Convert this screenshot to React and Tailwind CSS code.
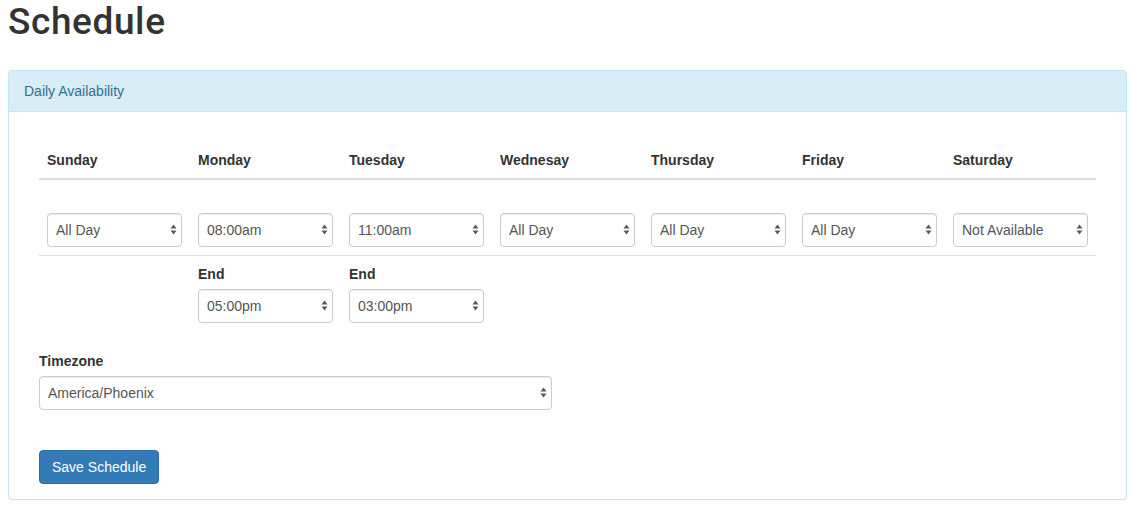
import React from 'react';

const days = [
    { name: 'Sunday', start: 'All Day' },
    { name: 'Monday', start: '08:00am', end: '05:00pm' },
    { name: 'Tuesday', start: '11:00am', end: '03:00pm' },
    { name: 'Wednesay', start: 'All Day' },
    { name: 'Thursday', start: 'All Day' },
    { name: 'Friday', start: 'All Day' },
    { name: 'Saturday', start: 'Not Available' },
];

// little up/down arrows like the native mac select
const Arrows = () => (
    <svg width="7" height="11" viewBox="0 0 7 11" className="shrink-0">
        <path d="M3.5 0.5 L6.5 4.5 L0.5 4.5 Z" fill="#5a5a5a" />
        <path d="M3.5 10.5 L6.5 6.5 L0.5 6.5 Z" fill="#5a5a5a" />
    </svg>
);

function FakeSelect({ value, className = '' }) {
    return (
        <div className={`flex items-center justify-between h-[34px] bg-white border border-[#ccc] rounded-[4px] pl-[8px] pr-[4px] text-[14px] text-[#555] shadow-[inset_0_1px_1px_rgba(0,0,0,0.075)] ${className}`}>
            <span className="leading-[20px]">{value}</span>
            <Arrows />
        </div>
    );
}

export default function App() {
    return (
        <div className="min-h-screen bg-white pl-[8px] pr-[7px] text-[#333] text-[14px] font-['Liberation_Sans','Helvetica_Neue',Arial,sans-serif]">
            <h1 className="pt-[2px] text-[37px] leading-[39.6px] font-medium tracking-[0.6px] text-[#333] mb-[28px] font-['Roboto','Liberation_Sans',sans-serif]">Schedule</h1>

            <div className="border border-[#bce8f1] rounded-[4px] bg-white">
                <div className="bg-[#d9edf7] border-b border-[#bce8f1] rounded-t-[3px] px-[15px] py-[10px] text-[#31708f] leading-[20px]">
                    Daily Availability
                </div>
                <div className="px-[15px] pt-[15px] pb-[15px]">
                    <div className="px-[15px] pt-[15px]">
                        <table className="w-full table-fixed border-collapse mb-[20px]">
                            <thead>
                                <tr>
                                    {days.map(d => (
                                        <th key={d.name} className="text-left font-bold leading-[20px] p-[8px] border-b-2 border-[#ddd]">{d.name}</th>
                                    ))}
                                </tr>
                            </thead>
                            <tbody>
                                <tr>
                                    {days.map(d => (
                                        <td key={d.name} className="px-[8px] pt-[33px] pb-[8px] align-top">
                                            <FakeSelect value={d.start} />
                                        </td>
                                    ))}
                                </tr>
                                <tr className="border-t border-[#ddd]">
                                    {days.map(d => (
                                        <td key={d.name} className="p-[8px] align-top">
                                            {d.end && (
                                                <>
                                                    <div className="font-bold leading-[20px] mb-[5px]">End</div>
                                                    <FakeSelect value={d.end} />
                                                </>
                                            )}
                                        </td>
                                    ))}
                                </tr>
                            </tbody>
                        </table>

                        <div className="font-bold leading-[20px] mb-[5px]">Timezone</div>
                        <FakeSelect value="America/Phoenix" className="w-[513px]" />

                        <button className="mt-[40px] h-[34px] px-[12px] bg-[#337ab7] border border-[#2e6da4] rounded-[4px] text-white text-[14px] leading-[20px]">
                            Save Schedule
                        </button>
                    </div>
                </div>
            </div>
        </div>
    );
}
